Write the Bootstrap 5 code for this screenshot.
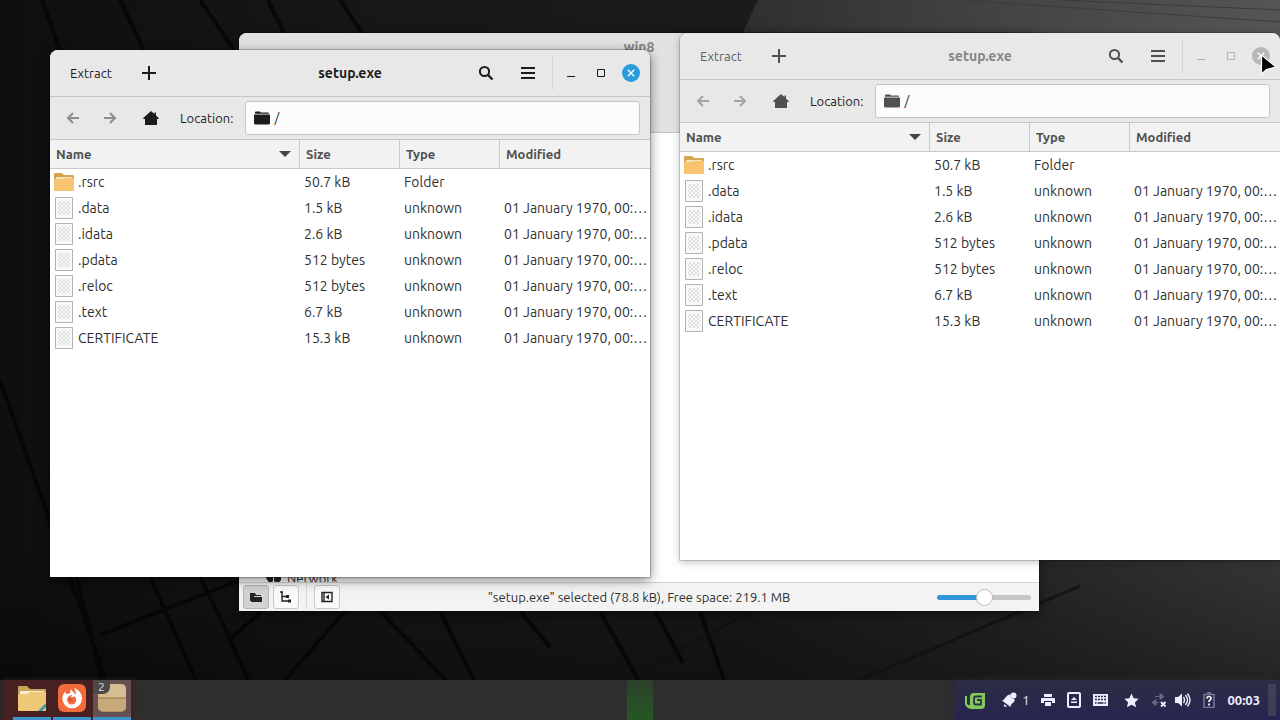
<!DOCTYPE html>
<html lang="en">
<head>
<meta charset="utf-8">
<meta name="viewport" content="width=device-width, initial-scale=1">
<title>Desktop</title>
<link href="https://cdn.jsdelivr.net/npm/bootstrap@5.3.0/dist/css/bootstrap.min.css" rel="stylesheet">
<style>
  body { font-family: Ubuntu, "Noto Sans", sans-serif; font-size: 13px; line-height: 20px; color: #303030; background: #141414; }
  svg { display: block; flex: none; }
  .wallpaper { width: 100%; height: 100%; }
  .win { overflow: hidden; border-radius: 8px 8px 0 0; box-shadow: 0 0 0 1px rgba(0,0,0,.2), 0 3px 12px rgba(0,0,0,.5); background: #fff; }
  .win-front { left: 50px; top: 50px; width: 600px; height: 527px; }
  .win-side { left: 680px; top: 33px; width: 600px; height: 527px; box-shadow: 0 0 0 1px rgba(0,0,0,.16), 0 2px 8px rgba(0,0,0,.25); }
  .win-files { left: 239px; top: 33px; width: 800px; height: 578px; }
  .side { flex: 1 1 0; }
  .bar { background: #e8e8e8; border-bottom: 1px solid #c6c6c6; color: #1c1c1c; }
  .titlebar { height: 47px; }
  .locbar { height: 43px; padding: 0 10px 0 4px; }
  .locbar label { margin: 0 12px 0 6px; }
  .flat { border: 0; background: none; padding: 0; color: inherit; display: flex; align-items: center; justify-content: center; }
  .extract { margin-left: 20px; }
  .w-icon { width: 30px; height: 30px; }
  .w-tool { width: 42px; height: 30px; }
  .w-nav { width: 37px; height: 30px; }
  .w-home { width: 46px; height: 30px; }
  .vline { width: 1px; height: 33px; margin: 0 3px; background: #d6d6d6; }
  .title-text { font-size: 14px; line-height: 20px; font-weight: 700; margin: 0; }
  .locfield { height: 34px; background: #fcfcfc; border: 1px solid #c6c6c6; border-radius: 3px; }
  .locfield input { border: 0; outline: 0; background: none; padding: 0; color: #1c1c1c; min-width: 0; }
  .files { table-layout: fixed; width: 100%; border-collapse: separate; border-spacing: 0; }
  .files th { height: 29px; padding: 0 6px; background: #f2f2f2; color: #505050; border-bottom: 1px solid #c9c9c9; border-right: 1px solid #c9c9c9; }
  .files th:last-child { border-right: 0; }
  .files th svg { margin-right: 2px; }
  .files td { height: 26px; padding: 0 4px; white-space: nowrap; font-size: 14px; }
  .c-name { width: 250px; } .c-col { width: 100px; }
  .backdrop .titlebar, .backdrop .icon-dim { color: #505050; }
  .backdrop .title-text, .win-files .title-text { color: #858585; }
  .backdrop .winctl { color: #b4b4b4; }
  .backdrop .extract { color: #606060; }
  .nav-dim { color: #8c8c8c; }
  .backdrop .nav-dim { color: #a4a4a4; }
  .close-btn { --disc: #2a9bdb; }
  .backdrop .close-btn { --disc: #b8b8b8; }
  .files-head { height: 100px; background: #e2e2e2; border-bottom: 1px solid #c6c6c6; }
  .side-row { height: 14px; margin-left: 26px; overflow: hidden; }
  .statusbar { height: 29px; background: #f3f3f3; border-top: 1px solid #d2d2d2; }
  .statusbar .vline { height: 24px; }
  .toggle { width: 26px; height: 24px; padding: 0; border: 1px solid #c8c8c8; border-radius: 3px; background: #fafafa; color: #222; display: flex; align-items: center; justify-content: center; }
  .toggle.on { background: #d2d2d2; border-color: #b4b4b4; }
  .zoomer { appearance: none; width: 94px; height: 18px; background: none; margin: 0; }
  .zoomer::-webkit-slider-runnable-track { height: 5px; border-radius: 3px; background: linear-gradient(90deg, #2f96d8 50%, #c6c6c6 50%); }
  .zoomer::-webkit-slider-thumb { appearance: none; width: 17px; height: 17px; margin-top: -6px; border-radius: 50%; background: #fff; border: 1px solid #bcbcbc; }
  .pointer { left: 1260px; top: 54px; }
  .panel { height: 40px; background: #2f2f2f; color: #eef; }
  .launchers { background: #472122; gap: 2px; padding-left: 9px; box-shadow: 4px 0 4px #3a2626; border-left: 4px solid #302828; }
  .launcher { width: 38px; height: 40px; border: 0; padding: 0 0 1px; border-bottom: 3px solid #3d94cf; background: none; display: flex; align-items: center; justify-content: center; }
  .launcher.on { background: #655151; }
  .count { left: 0; top: 0; width: 17px; height: 14px; line-height: 14px; font-size: 12px; border-radius: 0 0 7px 0; background: #4c4a48; color: #ddd; }
  .monitor { left: 49%; width: 26px; background: linear-gradient(#2d402c, #225823); }
  .tray { background: linear-gradient(#2d2d42, #262552); box-shadow: -4px 0 6px #2b2b38; padding: 0 4px 0 10px; gap: 8px; }
  .tray .flat { height: 40px; }
  .tray .bell { gap: 5px; }
  .clock { font-weight: 700; font-size: 13px; }
  .corner { width: 8px; height: 32px; background: #3f3f58; }
</style>
</head>
<body class="vh-100 overflow-hidden d-flex flex-column">

<svg width="0" height="0" class="position-absolute" aria-hidden="true">
  <symbol id="plus" viewBox="0 0 16 16"><path d="M8 1v14M1 8h14" stroke="currentColor" stroke-width="2"/></symbol>
  <symbol id="search" viewBox="0 0 16 16"><circle cx="6.5" cy="6.5" r="4.6" fill="none" stroke="currentColor" stroke-width="2"/><path d="M10 10l4.500 4.500" stroke="currentColor" stroke-width="2.400"/></symbol>
  <symbol id="menu" viewBox="0 0 16 16"><path d="M1 3h14M1 8h14M1 13h14" stroke="currentColor" stroke-width="2"/></symbol>
  <symbol id="back" viewBox="0 0 16 16"><path d="M14 8H3M8 3L3 8l5 5" fill="none" stroke="currentColor" stroke-width="2"/></symbol>
  <symbol id="forward" viewBox="0 0 16 16"><path d="M2 8h11M8 3l5 5-5 5" fill="none" stroke="currentColor" stroke-width="2"/></symbol>
  <symbol id="home" viewBox="0 0 16 16"><path d="M8 1l3.500 3V2.500H13v3L15.700 8v1H14v6H2V9H.3V8z" fill="currentColor"/></symbol>
  <symbol id="folder-dark" viewBox="0 0 16 14"><path d="M1 1.500Q1 .5 2 .5h4l1 1h7q1 0 1 1v.3H1zM0 3.500h16V12q0 1.500-1.500 1.500h-13Q0 13.500 0 12z" fill="currentColor"/></symbol>
  <symbol id="min" viewBox="0 0 12 12"><path d="M2 9.500h8" stroke="currentColor"/></symbol>
  <symbol id="max" viewBox="0 0 12 12"><path d="M2.500 2.500h7v7h-7z" fill="none" stroke="currentColor"/></symbol>
  <symbol id="close" viewBox="0 0 18 18"><circle cx="9" cy="9" r="9" fill="var(--disc)"/><path d="M5.800 5.800l6.400 6.400M12.200 5.800l-6.400 6.400" stroke="#fff" stroke-width="1.300"/></symbol>
  <symbol id="folder" viewBox="0 0 20 18"><path d="M0 1q0-1 1-1h7l2 2h9q1 0 1 1v8H0z" fill="#d5a550"/><path d="M2 4h16v4H2z" fill="#f3e2bd"/><path d="M0 6h8l2-1h10v12q0 1-1 1H1q-1 0-1-1z" fill="#f8c470"/></symbol>
  <pattern id="dots" width="4" height="4" patternUnits="userSpaceOnUse"><path d="M0 0h2v2H0zM2 2h2v2H2z" fill="#dedede"/></pattern>
  <symbol id="doc" viewBox="0 0 18 22"><path d="M.5.5h17v21H.5z" fill="#f9f9f9" stroke="#b2b2b2"/><path d="M3 4h12v14H3z" fill="url(#dots)"/></symbol>
</svg>

<main class="position-relative flex-grow-1 overflow-hidden">
  <svg class="wallpaper" viewBox="0 0 1280 680" preserveAspectRatio="none" aria-hidden="true">
    <defs>
      <linearGradient id="sky" x1="0" x2="1" y1="0" y2="0"><stop offset="0" stop-color="#0f0f0f"/><stop offset=".3" stop-color="#171717"/><stop offset=".58" stop-color="#1b1b1b"/><stop offset=".8" stop-color="#282828"/><stop offset="1" stop-color="#383838"/></linearGradient>
      <linearGradient id="sheen" x1="0" x2="1" y1="0" y2="0"><stop offset="0" stop-color="#2e2e2e"/><stop offset=".5" stop-color="#444"/><stop offset="1" stop-color="#555"/></linearGradient>
      <linearGradient id="low" x1="0" x2="0" y1="0" y2="1"><stop offset="0" stop-color="#000" stop-opacity="0"/><stop offset="1" stop-color="#000" stop-opacity=".35"/></linearGradient>
    </defs>
    <rect width="1280" height="680" fill="url(#sky)"/>
    <path d="M758 0h522v60H730z" fill="url(#sheen)"/>
    <path d="M960 0l320 22M1060 0l220 10" stroke="#3c3c3c" fill="none"/>
    <rect y="540" width="1280" height="140" fill="url(#low)"/>
    <g fill="none" stroke="#040404" stroke-opacity=".75" stroke-width="4">
      <path d="M42 0l18 50M120 0l24 50M200 0l34 50M268 0l16 33M340 0l22 33M0 380l106 300M50 470l52 210M150 577l46 103M200 577l20 40 28 63M262 611l-34 30M345 611l-60 69M380 611l66 69M440 611l34 69M520 611l30 36M600 611l38 69M655 611l28 52M700 611l24 69M100 635l140-55"/>
      <path d="M640 672l112-61M860 680l220-94" stroke="#101010" stroke-width="3"/>
    </g>
  </svg>

  <!-- File manager, at the back -->
  <section class="win win-files position-absolute d-flex flex-column" aria-label="win8">
    <header class="files-head"><h2 class="title-text text-center mt-1">win8</h2></header>
    <div class="flex-grow-1"></div>
    <div class="side-row d-flex gap-1 align-items-start">
      <svg class="mt-1" width="18" height="16" viewBox="0 0 18 16"><path d="M1 6a4 4 0 0 1 7-2v5l-3 3zM9 5h7v3l-3 4-4-3z" fill="#222"/></svg><span>Network</span>
    </div>
    <footer class="statusbar d-flex align-items-center px-1">
      <div class="side d-flex align-items-center gap-1">
        <button class="toggle on" aria-label="Places"><svg width="12" height="11" viewBox="0 0 12 11"><path d="M0 1h5l1 2h5v1H3L1 9H0zM3 5h9v5H1z" fill="currentColor"/><path d="M0 2h4v7H0z" fill="currentColor"/></svg></button>
        <button class="toggle" aria-label="Tree"><svg width="12" height="12" viewBox="0 0 12 12"><path d="M0 1h3M2 1v9h6M2 5.500h5" fill="none" stroke="currentColor" stroke-width="1.400"/><path d="M6 4h3v3H6zM8 8.500h3v3H8z" fill="currentColor"/></svg></button>
        <span class="vline"></span>
        <button class="toggle" aria-label="Hide sidebar"><svg width="12" height="12" viewBox="0 0 12 12"><path d="M1 1.500h10v9H1zM3 1.500v9" fill="none" stroke="currentColor" stroke-width="1.400"/><path d="M8 3.500v5L4.500 6z" fill="currentColor"/></svg></button>
      </div>
      <span>"setup.exe" selected (78.8 kB), Free space: 219.1 MB</span>
      <div class="side d-flex justify-content-end"><input class="zoomer me-1" type="range" aria-label="Zoom" value="50"></div>
    </footer>
  </section>

  <!-- Archive window, unfocused -->
  <section class="win win-side backdrop position-absolute" aria-label="setup.exe">
    <header class="bar titlebar d-flex align-items-center">
      <div class="side d-flex align-items-center">
        <button class="flat extract">Extract</button>
        <button class="flat w-tool ms-3" aria-label="Add"><svg width="16" height="16"><use href="#plus"/></svg></button>
      </div>
      <h2 class="title-text">setup.exe</h2>
      <div class="side d-flex align-items-center justify-content-end">
        <button class="flat w-tool" aria-label="Find"><svg width="16" height="16"><use href="#search"/></svg></button>
        <button class="flat w-tool" aria-label="Menu"><svg width="16" height="16"><use href="#menu"/></svg></button>
        <span class="vline"></span>
        <div class="d-flex winctl me-1">
          <button class="flat w-icon" aria-label="Minimise"><svg width="12" height="12"><use href="#min"/></svg></button>
          <button class="flat w-icon" aria-label="Maximise"><svg width="12" height="12"><use href="#max"/></svg></button>
          <button class="flat w-icon close-btn" aria-label="Close"><svg width="18" height="18"><use href="#close"/></svg></button>
        </div>
      </div>
    </header>
    <div class="bar locbar d-flex align-items-center">
      <button class="flat w-nav nav-dim" aria-label="Back"><svg width="16" height="16"><use href="#back"/></svg></button>
      <button class="flat w-nav nav-dim" aria-label="Forward"><svg width="16" height="16"><use href="#forward"/></svg></button>
      <button class="flat w-home icon-dim" aria-label="Home"><svg width="16" height="16"><use href="#home"/></svg></button>
      <label for="loc2">Location:</label>
      <div class="locfield d-flex align-items-center flex-grow-1 px-2"><svg class="icon-dim me-1" width="16" height="14"><use href="#folder-dark"/></svg><input id="loc2" class="flex-grow-1" value="/"></div>
    </div>
    <table class="files">
      <colgroup><col class="c-name"><col class="c-col"><col class="c-col"><col></colgroup>
      <thead><tr><th><div class="d-flex align-items-center justify-content-between">Name<svg width="12" height="6" viewBox="0 0 12 6"><path d="M0 0h12L6 6z" fill="#444"/></svg></div></th><th>Size</th><th>Type</th><th>Modified</th></tr></thead>
      <tbody data-listing></tbody>
    </table>
  </section>

  <!-- Archive window, focused -->
  <section class="win win-front position-absolute" aria-label="setup.exe">
    <header class="bar titlebar d-flex align-items-center">
      <div class="side d-flex align-items-center">
        <button class="flat extract">Extract</button>
        <button class="flat w-tool ms-3" aria-label="Add"><svg width="16" height="16"><use href="#plus"/></svg></button>
      </div>
      <h2 class="title-text">setup.exe</h2>
      <div class="side d-flex align-items-center justify-content-end">
        <button class="flat w-tool" aria-label="Find"><svg width="16" height="16"><use href="#search"/></svg></button>
        <button class="flat w-tool" aria-label="Menu"><svg width="16" height="16"><use href="#menu"/></svg></button>
        <span class="vline"></span>
        <div class="d-flex winctl me-1">
          <button class="flat w-icon" aria-label="Minimise"><svg width="12" height="12"><use href="#min"/></svg></button>
          <button class="flat w-icon" aria-label="Maximise"><svg width="12" height="12"><use href="#max"/></svg></button>
          <button class="flat w-icon close-btn" aria-label="Close"><svg width="18" height="18"><use href="#close"/></svg></button>
        </div>
      </div>
    </header>
    <div class="bar locbar d-flex align-items-center">
      <button class="flat w-nav nav-dim" aria-label="Back"><svg width="16" height="16"><use href="#back"/></svg></button>
      <button class="flat w-nav nav-dim" aria-label="Forward"><svg width="16" height="16"><use href="#forward"/></svg></button>
      <button class="flat w-home" aria-label="Home"><svg width="16" height="16"><use href="#home"/></svg></button>
      <label for="loc1">Location:</label>
      <div class="locfield d-flex align-items-center flex-grow-1 px-2"><svg class="me-1" width="16" height="14"><use href="#folder-dark"/></svg><input id="loc1" class="flex-grow-1" value="/"></div>
    </div>
    <table class="files">
      <colgroup><col class="c-name"><col class="c-col"><col class="c-col"><col></colgroup>
      <thead><tr><th><div class="d-flex align-items-center justify-content-between">Name<svg width="12" height="6" viewBox="0 0 12 6"><path d="M0 0h12L6 6z" fill="#444"/></svg></div></th><th>Size</th><th>Type</th><th>Modified</th></tr></thead>
      <tbody data-listing></tbody>
    </table>
  </section>

  <svg class="pointer position-absolute" width="18" height="24" viewBox="0 0 18 24" aria-hidden="true"><path d="M1.500 1v19l5-4.500L16 13z" fill="#000" stroke="#fff" stroke-width="1.200"/></svg>
</main>

<footer class="panel d-flex position-relative flex-shrink-0">
  <div class="launchers d-flex">
    <button class="launcher" aria-label="Files"><svg width="28" height="26" viewBox="0 0 28 26"><path d="M0 2q0-1 1-1h8l3 3h15q1 0 1 1v8H0z" fill="#c9a35c"/><path d="M2 6h24v5H2z" fill="#f7ebd0"/><path d="M0 9h10l2-2h16v18q0 1-1 1H1q-1 0-1-1z" fill="#efc877"/><path d="M20 26l8-8v4l-4 4z" fill="#2f9bb5"/></svg></button>
    <button class="launcher" aria-label="Firefox"><svg width="28" height="28" viewBox="0 0 28 28"><rect width="28" height="28" rx="6" fill="#f06c3a"/><path d="M7.500 7.500q0 2 1.500 3 1-1.500 3.500-1.500-1-2 .5-4 .5 2 2.500 3l2 3q1-3-1.500-7 8 3 8 10.500a9.800 9.800 0 0 1-19.600 0q0-4.500 3.100-7z" fill="#fff"/><path d="M10.500 12.500q2-2 3.500-1.500l-1 2q2 .5 3.500-.5 2 1 1.800 3.500a4.600 4.600 0 0 1-9.200 0q0-2 1.400-3.500z" fill="#f06c3a"/><path d="M10 13.500q2 .3 2.500 1.500 1.500.7 3-.2-1 3-3.500 2.400Q10 16.500 10 13.500z" fill="#d9512c"/></svg></button>
    <button class="launcher on position-relative" aria-label="Archive Manager, 2 windows"><svg width="28" height="28" viewBox="0 0 28 28"><rect width="28" height="28" rx="5" fill="#b19466"/><path d="M0 14V5q0-5 5-5h18q5 0 5 5v9z" fill="#d5bd91"/><path d="M0 14h28v9q0 4-5 4H5q-5 0-5-4z" fill="#c6aa7a"/><path d="M0 14h28" stroke="#927a52"/></svg><span class="count position-absolute text-center">2</span></button>
  </div>
  <div class="monitor position-absolute h-100"></div>
  <div class="tray d-flex align-items-center ms-auto">
    <button class="flat" aria-label="Mint menu"><svg width="20" height="17" viewBox="0 0 20 17"><path d="M0 4h2v7q0 2 2 2h1V5q0-4 4-4h11v12q0 4-4 4H6q-5-1-6-5z" fill="#87c85a"/><path d="M17 4.500h-6q-2 0-2 2v4q0 2 2 2h5V8h-4" fill="none" stroke="#25364a" stroke-width="1.800"/><path d="M3.500 2v9" stroke="#25364a"/></svg></button>
    <button class="flat bell ms-2" aria-label="Notifications"><svg width="16" height="16" viewBox="0 0 16 16"><path d="M1 8.500q2-.5 3.500-3Q7 2 9.500 2.500L10 6l3.500 1q.5 3-2.500 4.500-1.500 1-1.500 3.500z" fill="#eef"/><circle cx="12.500" cy="3.500" r="3" fill="#eef"/><path d="M3 12l3 2.500q-2 1-3-.5z" fill="#eef"/></svg><span>1</span></button>
    <button class="flat ms-1" aria-label="Printers"><svg width="14" height="14" viewBox="0 0 14 14"><path d="M3 1h8v3H3zM1 5h12q1 0 1 1v4h-3V8H3v2H0V6q0-1 1-1zM4 9h6v4H4z" fill="#eef"/></svg></button>
    <button class="flat ms-1" aria-label="Removable drives"><svg width="14" height="16" viewBox="0 0 14 16"><rect x="1" y="1" width="12" height="14" rx="1" fill="none" stroke="#eef" stroke-width="2"/><path d="M4 8l3-3 3 3zM4 9.500h6V11H4z" fill="#eef"/></svg></button>
    <button class="flat ms-1" aria-label="Keyboard"><svg width="15" height="14" viewBox="0 0 15 14"><path d="M0 1h15v12H0z" fill="#eef"/><path d="M2 3.500h11M2 6.500h11" stroke="#28284c" stroke-width="1.600" stroke-dasharray="2 1"/><path d="M2 10h11" stroke="#28284c" stroke-width="1.600" stroke-dasharray="1.500 1 6 1"/></svg></button>
    <button class="flat ms-2" aria-label="Updates"><svg width="15" height="15" viewBox="0 0 16 16"><path d="M8 .5l2.300 5 5.400.6-4 3.700 1.100 5.500L8 12.600l-4.800 2.700 1.100-5.500-4-3.700 5.400-.6z" fill="#eef"/></svg></button>
    <button class="flat ms-1" aria-label="Network"><svg width="16" height="16" viewBox="0 0 16 16"><path d="M4 4.500h6M9 1.500l4 3-4 3zM8 10.500H4M5 7.500l-4 3 4 3z" fill="#66668a" stroke="#66668a"/><path d="M10 10l4.500 4.500M14.500 10L10 14.500" stroke="#eef" stroke-width="1.800"/></svg></button>
    <button class="flat" aria-label="Sound"><svg width="16" height="16" viewBox="0 0 16 16"><path d="M0 5h3l4-3.500v13L3 11H0z" fill="#eef"/><path d="M8.500 5q2 3 0 6M10.500 3q4 5 0 10M12.500 1.500q5 6.500 0 13" fill="none" stroke="#eef" stroke-width="1.400"/></svg></button>
    <button class="flat ms-1" aria-label="Battery"><svg width="12" height="16" viewBox="0 0 12 16"><path d="M4 .8h4M1 2.500h10v13H1z" fill="none" stroke="#77779a" stroke-width="1.500"/><path d="M4 6.500q0-2 2-2t2 2q0 1-1 1.600t-1 1.900M6 11.500v2" fill="none" stroke="#fff" stroke-width="1.700"/></svg></button>
    <button class="flat clock ms-1">00:03</button>
    <span class="corner"></span>
  </div>
</footer>

<script src="https://cdn.jsdelivr.net/npm/bootstrap@5.3.0/dist/js/bootstrap.bundle.min.js"></script>
<script>
  const date = '01 January 1970, 00:…';
  const entries = [
    ['.rsrc', '50.7 kB', 'Folder', ''],
    ['.data', '1.5 kB', 'unknown', date],
    ['.idata', '2.6 kB', 'unknown', date],
    ['.pdata', '512 bytes', 'unknown', date],
    ['.reloc', '512 bytes', 'unknown', date],
    ['.text', '6.7 kB', 'unknown', date],
    ['CERTIFICATE', '15.3 kB', 'unknown', date]
  ];
  const icon = type => type === 'Folder'
    ? '<svg width="20" height="18"><use href="#folder"/></svg>'
    : '<svg width="20" height="22"><use href="#doc"/></svg>';
  document.querySelectorAll('[data-listing]').forEach(body => {
    body.innerHTML = entries.map(([name, size, type, modified]) =>
      `<tr><td><div class="d-flex align-items-center gap-1">${icon(type)}${name}</div></td><td>${size}</td><td>${type}</td><td>${modified}</td></tr>`).join('');
  });
</script>
</body>
</html>
